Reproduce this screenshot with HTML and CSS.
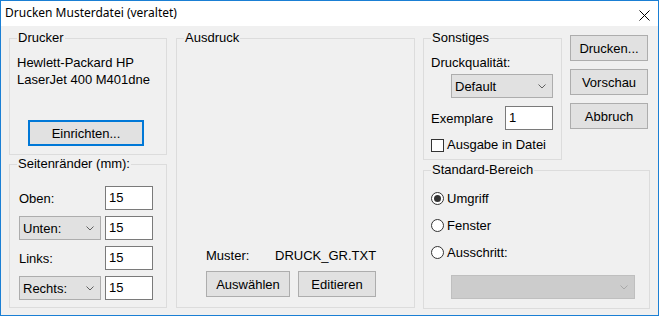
FILE: index.html
```html
<!DOCTYPE html>
<html lang="de">
<head>
<meta charset="utf-8">
<title>Drucken Musterdatei (veraltet)</title>
<link rel="stylesheet" href="styles.css">
</head>
<body>
<div class="window">
  <div class="titlebar">
    <span class="title">Drucken Musterdatei (veraltet)</span>
    <svg class="close" width="11" height="11" viewBox="0 0 11 11"><path d="M0.5 0.5 L10.5 10.5 M10.5 0.5 L0.5 10.5" stroke="#000" stroke-width="1" fill="none"/></svg>
  </div>
  <div class="content">
    <div class="col col-left">
      <fieldset class="group g-drucker">
        <legend>Drucker</legend>
        <div class="body body-drucker">
          <div class="printer">Hewlett-Packard HP<br>LaserJet 400 M401dne</div>
          <button class="btn btn-focus btn-setup">Einrichten...</button>
        </div>
      </fieldset>
      <fieldset class="group g-margins">
        <legend>Seitenränder (mm):</legend>
        <div class="body margin-grid">
          <span class="lbl">Oben:</span><span class="input">15</span>
          <span class="combo"><span>Unten:</span><svg class="chev" width="8" height="5" viewBox="0 0 8 5"><path d="M0.5 0.5 L4 4 L7.5 0.5" stroke="#606060" fill="none"/></svg></span><span class="input">15</span>
          <span class="lbl">Links:</span><span class="input">15</span>
          <span class="combo"><span>Rechts:</span><svg class="chev" width="8" height="5" viewBox="0 0 8 5"><path d="M0.5 0.5 L4 4 L7.5 0.5" stroke="#606060" fill="none"/></svg></span><span class="input">15</span>
        </div>
      </fieldset>
    </div>
    <fieldset class="group g-ausdruck">
      <legend>Ausdruck</legend>
      <div class="body body-ausdruck">
        <div class="muster"><span class="muster-lbl">Muster:</span><span>DRUCK_GR.TXT</span></div>
        <div class="btn-row">
          <button class="btn btn-ausw">Auswählen</button>
          <button class="btn btn-edit">Editieren</button>
        </div>
      </div>
    </fieldset>
    <div class="col col-right">
      <div class="top-row">
        <fieldset class="group g-sonst">
          <legend>Sonstiges</legend>
          <div class="body body-sonst">
            <div class="line">Druckqualität:</div>
            <span class="combo combo-q"><span>Default</span><svg class="chev" width="8" height="5" viewBox="0 0 8 5"><path d="M0.5 0.5 L4 4 L7.5 0.5" stroke="#606060" fill="none"/></svg></span>
            <div class="copies"><span>Exemplare</span><span class="input">1</span></div>
            <div class="check-row"><span class="checkbox"></span><span>Ausgabe in Datei</span></div>
          </div>
        </fieldset>
        <div class="actions">
          <button class="btn btn-side">Drucken...</button>
          <button class="btn btn-side">Vorschau</button>
          <button class="btn btn-side">Abbruch</button>
        </div>
      </div>
      <fieldset class="group g-bereich">
        <legend>Standard-Bereich</legend>
        <div class="body body-bereich">
          <div class="radio-row"><span class="radio checked"></span><span>Umgriff</span></div>
          <div class="radio-row"><span class="radio"></span><span>Fenster</span></div>
          <div class="radio-row"><span class="radio"></span><span>Ausschritt:</span></div>
          <span class="combo combo-dis"><span></span><svg class="chev" width="8" height="5" viewBox="0 0 8 5"><path d="M0.5 0.5 L4 4 L7.5 0.5" stroke="#a8a8a8" fill="none"/></svg></span>
        </div>
      </fieldset>
    </div>
  </div>
</div>
</body>
</html>
```
FILE: styles.css
```css
html, body {
  margin: 0;
  padding: 0;
  background: #ffffff;
}
body {
  font-family: "Liberation Sans", Arial, sans-serif;
  font-size: 13px;
  color: #000;
}
.window {
  width: 659px;
  height: 316px;
  box-sizing: border-box;
  border: 1px solid #1a7fd4;
  display: flex;
  flex-direction: column;
  background: #f0f0f0;
}
.titlebar {
  height: 25px;
  flex: none;
  background: #ffffff;
  display: flex;
  align-items: center;
  justify-content: space-between;
  padding: 0 8px 0 4px;
}
.title {
  font-family: "Noto Sans", "Open Sans", sans-serif;
  font-size: 12px;
  position: relative;
  top: -1px;
}
.close {
  display: block;
  margin-top: 3px;
}
.content {
  flex: 1;
  display: flex;
  padding: 4px 0 0 8px;
  gap: 9px;
}
.col {
  display: flex;
  flex-direction: column;
}
.col-left {
  width: 158px;
  gap: 1px;
}
.group {
  margin: 0;
  box-sizing: border-box;
  border: 1px solid #dcdcdc;
  min-width: 0;
  padding: 0;
}
.group legend {
  padding: 0 1px;
  margin-left: 7px;
  line-height: 16px;
  font-size: 13px;
}
.g-drucker {
  height: 125px;
}
.body-drucker {
  padding: 8px 0 0 7px;
}
.printer {
  line-height: 17px;
}
.btn {
  font-family: "Liberation Sans", Arial, sans-serif;
  font-size: 13px;
  color: #000;
  background: #e1e1e1;
  border: 1px solid #adadad;
  box-sizing: border-box;
  height: 26px;
  padding: 0;
  margin: 0;
  display: block;
}
.btn-focus {
  border: 2px solid #0078d7;
}
.btn-setup {
  margin-top: 32px;
  margin-left: 11px;
  width: 116px;
}
.g-margins {
  height: 152px;
}
.margin-grid {
  padding: 14px 0 0 9px;
  display: grid;
  grid-template-columns: 82px 48px;
  column-gap: 4px;
  row-gap: 6px;
  grid-auto-rows: 24px;
  align-items: center;
}
.input {
  height: 24px;
  box-sizing: border-box;
  border: 1px solid #7a7a7a;
  background: #fff;
  padding: 2px 0 0 3px;
  line-height: 17px;
  display: block;
}
.combo {
  height: 24px;
  box-sizing: border-box;
  border: 1px solid #adadad;
  background: #e1e1e1;
  display: flex;
  align-items: center;
  justify-content: space-between;
  padding: 0 6px 0 3px;
}
.combo .chev {
  display: block;
}
.g-ausdruck {
  width: 239px;
  height: 278px;
}
.body-ausdruck {
  padding: 202px 0 0 29px;
}
.muster {
  display: flex;
  line-height: 16px;
  margin-bottom: 7px;
}
.muster-lbl {
  width: 69px;
}
.btn-row {
  display: flex;
  gap: 8px;
}
.btn-ausw { width: 84px; }
.btn-edit { width: 78px; }
.col-right {
  margin-left: -1px;
  gap: 2px;
}
.top-row {
  display: flex;
  gap: 8px;
}
.g-sonst {
  width: 139px;
  height: 130px;
}
.body-sonst {
  padding: 9px 0 0 7px;
  width: 122px;
}
.line {
  line-height: 16px;
}
.combo-q {
  width: 102px;
  margin: 3px 0 0 20px;
}
.copies {
  display: flex;
  align-items: center;
  justify-content: space-between;
  margin-top: 8px;
}
.copies .input {
  width: 48px;
}
.check-row {
  display: flex;
  align-items: center;
  gap: 3px;
  margin-top: 8px;
  line-height: 14px;
}
.checkbox {
  width: 13px;
  height: 13px;
  box-sizing: border-box;
  border: 1px solid #333;
  background: #fff;
}
.actions {
  display: flex;
  flex-direction: column;
  gap: 8px;
  padding-top: 5px;
}
.btn-side { width: 78px; }
.g-bereich {
  width: 227px;
  height: 147px;
}
.body-bereich {
  padding: 14px 0 0 7px;
  display: flex;
  flex-direction: column;
  gap: 14px;
}
.radio-row {
  display: flex;
  align-items: center;
  gap: 3px;
  height: 13px;
}
.radio {
  width: 13px;
  height: 13px;
  box-sizing: border-box;
  border: 1px solid #333;
  border-radius: 50%;
  background: #fff;
  display: flex;
  align-items: center;
  justify-content: center;
}
.radio.checked::after {
  content: "";
  width: 7px;
  height: 7px;
  border-radius: 50%;
  background: #333;
}
.combo-dis {
  width: 184px;
  margin: 2px 0 0 20px;
  background: #cccccc;
  border-color: #bfbfbf;
}
```
